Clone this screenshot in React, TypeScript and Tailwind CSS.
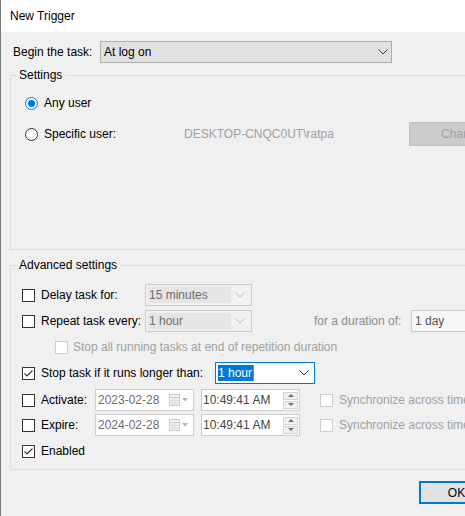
import type { ReactNode } from 'react';

const Chevron = ({ color = '#333333' }: { color?: string }) => (
  <svg width="10" height="6" viewBox="0 0 10 6">
    <polyline points="0.5,0.5 5,5 9.5,0.5" fill="none" stroke={color} strokeWidth="1" />
  </svg>
);

const Check = ({ checked = false, disabled = false }: { checked?: boolean; disabled?: boolean }) => (
  <div
    className={
      disabled
        ? 'w-[13px] h-[13px] shrink-0 border border-[#cccccc] bg-white'
        : 'w-[13px] h-[13px] shrink-0 border border-[#333333] bg-white flex items-center justify-center'
    }
  >
    {checked && (
      <svg width="11" height="11" viewBox="0 0 11 11">
        <polyline points="1.5,5.5 4,8 9.5,2.5" fill="none" stroke="#333333" strokeWidth="1.1" />
      </svg>
    )}
  </div>
);

const Radio = ({ selected = false }: { selected?: boolean }) => (
  <div
    className={
      selected
        ? 'w-[13px] h-[13px] shrink-0 rounded-full border border-[#0078d7] bg-white flex items-center justify-center'
        : 'w-[13px] h-[13px] shrink-0 rounded-full border border-[#333333] bg-white'
    }
  >
    {selected && <div className="w-[7px] h-[7px] rounded-full bg-[#0078d7]" />}
  </div>
);

const DisabledCombo = ({ value, width }: { value: string; width: string }) => (
  <div className={`${width} h-[22px] shrink-0 border border-[#cccccc] bg-[#f0f0f0] flex items-center p-[2px]`}>
    <div className="flex-1 h-full bg-[#e5e5e5] text-[#6d6d6d] pl-[1px] leading-[16px]">{value}</div>
    <div className="w-[18px] flex justify-center">
      <Chevron color="#bfbfbf" />
    </div>
  </div>
);

const CalendarIcon = () => (
  <svg width="20" height="12" viewBox="0 0 20 12">
    <rect x="0.5" y="0.5" width="10" height="11" fill="#f4f4f4" stroke="#c8c8c8" />
    <line x1="0.5" y1="3.5" x2="10.5" y2="3.5" stroke="#c8c8c8" />
    <line x1="0.5" y1="6.5" x2="10.5" y2="6.5" stroke="#dcdcdc" />
    <line x1="0.5" y1="9" x2="10.5" y2="9" stroke="#dcdcdc" />
    <line x1="4" y1="3.5" x2="4" y2="11.5" stroke="#dcdcdc" />
    <line x1="7" y1="3.5" x2="7" y2="11.5" stroke="#dcdcdc" />
    <polygon points="13,4 19,4 16,7.5" fill="#b4b4b4" />
  </svg>
);

const DateBox = ({ value }: { value: string }) => (
  <div className="w-[99px] h-[22px] shrink-0 border border-[#cccccc] bg-white flex items-center pl-[2px]">
    <span className="w-[71px] text-[#6d6d6d]">{value}</span>
    <CalendarIcon />
  </div>
);

const TimeBox = ({ value }: { value: string }) => (
  <div className="w-[99px] h-[22px] shrink-0 border border-[#cccccc] bg-white flex items-center pl-[1px]">
    <span className="w-[80px] text-[#444444]">{value}</span>
    <div className="flex flex-col gap-[1px]">
      <div className="w-[15px] h-[8px] border border-[#d4d4d4] bg-[#f0f0f0] flex items-center justify-center">
        <svg width="6" height="3" viewBox="0 0 6 3">
          <polygon points="0,3 6,3 3,0" fill="#6d6d6d" />
        </svg>
      </div>
      <div className="w-[15px] h-[8px] border border-[#d4d4d4] bg-[#f0f0f0] flex items-center justify-center">
        <svg width="6" height="3" viewBox="0 0 6 3">
          <polygon points="0,0 6,0 3,3" fill="#6d6d6d" />
        </svg>
      </div>
    </div>
  </div>
);

const Group = ({ title, height, children }: { title: string; height: string; children: ReactNode }) => (
  <fieldset className={`ml-[9px] w-[480px] ${height} min-w-0 border border-[#dcdcdc] p-0`}>
    <legend className="ml-[5px] px-[3px] leading-[14px]">{title}</legend>
    {children}
  </fieldset>
);

const App = () => {
  return (
    <div className="w-[465px] h-[516px] overflow-hidden bg-[#f0f0f0] border-l border-[#7a7a7a] text-[12px] text-black font-['Liberation_Sans',Arial,sans-serif]">
      <div className="h-[32px] bg-white flex items-center pl-[9px]">New Trigger</div>

      <div className="mt-[9px] h-[22px] flex items-center">
        <span className="w-[99px] pl-[12px]">Begin the task:</span>
        <div className="w-[292px] h-[22px] border border-[#adadad] bg-[#e1e1e1] flex items-center justify-between pl-[3px] pr-[3px]">
          <span>At log on</span>
          <Chevron />
        </div>
      </div>

      <div className="mt-[5px]">
        <Group title="Settings" height="h-[182px]">
          <div className="pl-[14px]">
            <div className="mt-[13px] h-[16px] flex items-center">
              <Radio selected />
              <span className="ml-[6px]">Any user</span>
            </div>
            <div className="mt-[11px] h-[24px] flex items-center">
              <Radio />
              <span className="ml-[6px] w-[140px] shrink-0">Specific user:</span>
              <span className="w-[225px] shrink-0 text-[#a0a0a0]">DESKTOP-CNQC0UT\ratpa</span>
              <div className="w-[110px] h-[24px] shrink-0 border border-[#bfbfbf] bg-[#cccccc] text-[#a0a0a0] flex items-center pl-[31px] whitespace-nowrap">
                Change User...
              </div>
            </div>
          </div>
        </Group>
      </div>

      <div className="mt-[8px]">
        <Group title="Advanced settings" height="h-[212px]">
          <div className="pl-[11px] whitespace-nowrap">
            <div className="mt-[12px] h-[22px] flex items-center">
              <Check />
              <span className="ml-[6px] w-[104px] shrink-0">Delay task for:</span>
              <DisabledCombo value="15 minutes" width="w-[107px]" />
            </div>
            <div className="mt-[4px] h-[22px] flex items-center">
              <Check />
              <span className="ml-[6px] w-[104px] shrink-0">Repeat task every:</span>
              <DisabledCombo value="1 hour" width="w-[107px]" />
              <span className="ml-[62px] w-[97px] shrink-0 text-[#8c8c8c]">for a duration of:</span>
              <div className="w-[80px] h-[22px] shrink-0 border border-[#cccccc] bg-[#f7f7f7] flex items-center pl-[3px] text-[#555555]">
                1 day
              </div>
            </div>
            <div className="mt-[6px] h-[18px] flex items-center">
              <div className="ml-[33px]">
                <Check disabled />
              </div>
              <span className="ml-[5px] text-[#a0a0a0]">Stop all running tasks at end of repetition duration</span>
            </div>
            <div className="mt-[6px] h-[22px] flex items-center">
              <Check checked />
              <span className="ml-[6px] w-[174px] shrink-0">Stop task if it runs longer than:</span>
              <div className="w-[100px] h-[22px] shrink-0 border border-[#0078d7] bg-white flex items-center justify-between pl-[2px] pr-[5px]">
                <div className="flex items-center">
                  <span className="bg-[#0078d7] text-white leading-[16px] pr-[1px]">1 hour</span>
                  <div className="w-[1px] h-[16px] bg-[#f7630c]" />
                </div>
                <Chevron />
              </div>
            </div>
            <div className="mt-[5px] h-[22px] flex items-center">
              <Check />
              <span className="ml-[6px] w-[54px] shrink-0">Activate:</span>
              <DateBox value="2023-02-28" />
              <div className="ml-[7px]">
                <TimeBox value="10:49:41 AM" />
              </div>
              <div className="ml-[20px]">
                <Check disabled />
              </div>
              <span className="ml-[6px] text-[#a0a0a0]">Synchronize across time zones</span>
            </div>
            <div className="mt-[3px] h-[22px] flex items-center">
              <Check />
              <span className="ml-[6px] w-[54px] shrink-0">Expire:</span>
              <DateBox value="2024-02-28" />
              <div className="ml-[7px]">
                <TimeBox value="10:49:41 AM" />
              </div>
              <div className="ml-[20px]">
                <Check disabled />
              </div>
              <span className="ml-[6px] text-[#a0a0a0]">Synchronize across time zones</span>
            </div>
            <div className="mt-[7px] h-[16px] flex items-center">
              <Check checked />
              <span className="ml-[6px]">Enabled</span>
            </div>
          </div>
        </Group>
      </div>

      <div className="mt-[11px] ml-[418px] w-[75px] h-[23px] border-2 border-[#0078d7] bg-[#e1e1e1] flex items-center justify-center">
        OK
      </div>
    </div>
  );
};

export default App;
